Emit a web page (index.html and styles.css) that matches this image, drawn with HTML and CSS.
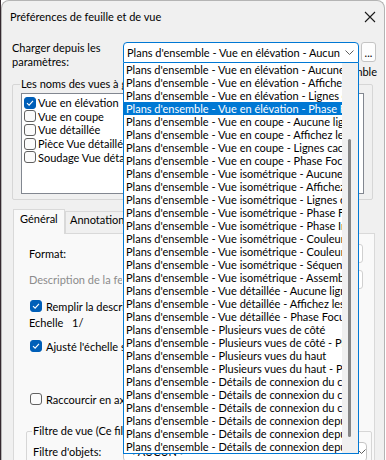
FILE: index.html
```html
<!DOCTYPE html>
<html lang="fr">
<head>
    <meta charset="UTF-8">
    <title>Préférences de feuille et de vue</title>
    <link rel="stylesheet" href="styles.css">
</head>
<body>
    <div class="window">
        <div class="titlebar">
            <span class="title">Préférences de feuille et de vue</span>
            <svg class="close" width="12" height="12" viewBox="0 0 12 12">
                <path d="M1 1 L11 11 M11 1 L1 11" stroke="#1a1a1a" stroke-width="1.1" fill="none"/>
            </svg>
        </div>

        <div class="content">
            <!-- chargement des paramètres -->
            <div class="load-row">
                <div class="load-label">Charger depuis les<br>paramètres:</div>
                <div class="combo-wrap">
                    <div class="combo open">
                        <span class="combo-text">Plans d'ensemble - Vue en élévation - Aucune ligne cachée</span>
                        <svg class="chevron" width="9" height="5" viewBox="0 0 9 5">
                            <path d="M0.5 0.5 L4.5 4.5 L8.5 0.5" stroke="#5d5d5d" stroke-width="1" fill="none"/>
                        </svg>
                    </div>
                    <div class="dropdown">
                        <ul class="dropdown-items">
                            <li>Plans d'ensemble - Vue en élévation - Aucune ligne cachée</li>
                            <li>Plans d'ensemble - Vue en élévation - Affichez les lignes cachées</li>
                            <li>Plans d'ensemble - Vue en élévation - Lignes cachées</li>
                            <li class="selected">Plans d'ensemble - Vue en élévation - Phase Focus</li>
                            <li>Plans d'ensemble - Vue en coupe - Aucune ligne cachée</li>
                            <li>Plans d'ensemble - Vue en coupe - Affichez les lignes cachées</li>
                            <li>Plans d'ensemble - Vue en coupe - Lignes cachées</li>
                            <li>Plans d'ensemble - Vue en coupe - Phase Focus</li>
                            <li>Plans d'ensemble - Vue isométrique - Aucune ligne cachée</li>
                            <li>Plans d'ensemble - Vue isométrique - Affichez les lignes cachées</li>
                            <li>Plans d'ensemble - Vue isométrique - Lignes cachées</li>
                            <li>Plans d'ensemble - Vue isométrique - Phase Focus</li>
                            <li>Plans d'ensemble - Vue isométrique - Phase Info</li>
                            <li>Plans d'ensemble - Vue isométrique - Couleur par phase</li>
                            <li>Plans d'ensemble - Vue isométrique - Couleur par classe</li>
                            <li>Plans d'ensemble - Vue isométrique - Séquence</li>
                            <li>Plans d'ensemble - Vue isométrique - Assemblage</li>
                            <li>Plans d'ensemble - Vue détaillée - Aucune ligne cachée</li>
                            <li>Plans d'ensemble - Vue détaillée - Affichez les lignes cachées</li>
                            <li>Plans d'ensemble - Vue détaillée - Phase Focus</li>
                            <li>Plans d'ensemble - Plusieurs vues de côté</li>
                            <li>Plans d'ensemble - Plusieurs vues de côté - Phase Focus</li>
                            <li>Plans d'ensemble - Plusieurs vues du haut</li>
                            <li>Plans d'ensemble - Plusieurs vues du haut - Phase Focus</li>
                            <li>Plans d'ensemble - Détails de connexion du côté</li>
                            <li>Plans d'ensemble - Détails de connexion du côté - Phase Focus</li>
                            <li>Plans d'ensemble - Détails de connexion du côté - Lignes cachées</li>
                            <li>Plans d'ensemble - Détails de connexion depuis le haut</li>
                            <li>Plans d'ensemble - Détails de connexion depuis le haut - Phase Focus</li>
                            <li>Plans d'ensemble - Détails de connexion depuis le haut - Lignes cachées</li>
                        </ul>
                        <div class="scrollbar"><div class="thumb"></div></div>
                    </div>
                </div>
                <button class="more-btn">...</button>
            </div>
            <div class="assembly-row">Charger la vue d'ensemble</div>

            <!-- noms des vues -->
            <fieldset class="group names-group">
                <legend>Les noms des vues à générer</legend>
                <div class="names-list">
                    <div class="name-item"><span class="cb checked"><svg width="12" height="12" viewBox="0 0 12 12"><path d="M3 6.2 L5.1 8.2 L9 3.9" stroke="#fff" stroke-width="1.1" fill="none"/></svg></span>Vue en élévation</div>
                    <div class="name-item"><span class="cb"></span>Vue en coupe</div>
                    <div class="name-item"><span class="cb"></span>Vue détaillée</div>
                    <div class="name-item"><span class="cb"></span>Pièce Vue détaillée</div>
                    <div class="name-item"><span class="cb"></span>Soudage Vue détaillée</div>
                </div>
            </fieldset>

            <!-- onglets -->
            <div class="tabs">
                <div class="tab active">Général</div>
                <div class="tab">Annotations</div>
            </div>
            <div class="tab-panel">
                <div class="field-row format-row">
                    <span class="field-label">Format:</span>
                    <div class="field-box"></div>
                </div>
                <div class="field-row desc-row">
                    <span class="placeholder">Description de la feuille</span>
                    <div class="field-box"></div>
                </div>
                <div class="check-row fill-row">
                    <span class="cb checked"><svg width="12" height="12" viewBox="0 0 12 12"><path d="M3 6.2 L5.1 8.2 L9 3.9" stroke="#fff" stroke-width="1.1" fill="none"/></svg></span>Remplir la description automatiquement
                </div>
                <div class="field-row scale-row">
                    <span class="field-label">Echelle <span class="scale-prefix">1/</span></span>
                </div>
                <div class="check-row fit-row">
                    <span class="cb checked"><svg width="12" height="12" viewBox="0 0 12 12"><path d="M3 6.2 L5.1 8.2 L9 3.9" stroke="#fff" stroke-width="1.1" fill="none"/></svg></span>Ajusté l'échelle selon la feuille
                </div>
                <div class="check-row short-row">
                    <span class="cb"></span>Raccourcir en axe
                </div>
                <fieldset class="group filter-group">
                    <legend>Filtre de vue (Ce filtre s'applique à toutes les vues)</legend>
                    <div class="field-row filter-row">
                        <span class="field-label">Filtre d'objets:</span>
                        <div class="combo small">
                            <span class="combo-text">&lt; AUCUN &gt;</span>
                            <svg class="chevron" width="9" height="5" viewBox="0 0 9 5">
                                <path d="M0.5 0.5 L4.5 4.5 L8.5 0.5" stroke="#5d5d5d" stroke-width="1" fill="none"/>
                            </svg>
                        </div>
                    </div>
                </fieldset>
            </div>
        </div>
    </div>
</body>
</html>
```

FILE: styles.css
```css
:root {
    --accent: #0078d4;
    --bg: #f0f0f0;
}

* {
    box-sizing: border-box;
}

body {
    margin: 0;
    height: 460px;
    overflow: hidden;
    background: linear-gradient(to right, #35292f 0 1px, #fff 1px);
    font-family: Lato, "Liberation Sans", sans-serif;
    font-size: 11px;
    color: #000;
}

.window {
    margin-left: 1px;
    width: 384px;
    height: 480px;
    background: var(--bg);
    border: 1px solid #b4b4b4;
    border-bottom: none;
    border-radius: 8px 8px 0 0;
}

.titlebar {
    height: 31px;
    display: flex;
    align-items: center;
    justify-content: space-between;
    padding: 0 8px 0 8px;
}

.content {
    padding-top: 9px;
}

/* ligne de chargement */
.load-row {
    display: flex;
    align-items: flex-start;
    height: 24px;
    padding-left: 10px;
}

.load-label {
    width: 111px;
    line-height: 14px;
}

.combo-wrap {
    position: relative;
    margin-top: 1px;
}

.combo {
    display: flex;
    align-items: center;
    width: 236px;
    height: 21px;
    padding-left: 3px;
    background: #fff;
    border: 1px solid #c4c4c4;
    border-radius: 4px;
}

.combo.open {
    border-color: var(--accent);
    border-radius: 4px 4px 0 0;
}

.combo-text {
    width: 213px;
    overflow: hidden;
    white-space: nowrap;
}

.chevron {
    margin-left: 5px;
}

.dropdown {
    position: absolute;
    top: 100%;
    left: 0;
    width: 236px;
    display: flex;
    background: #fff;
    border: 1px solid var(--accent);
    border-top: none;
    z-index: 10;
}

.dropdown-items {
    list-style: none;
    margin: 0;
    padding: 0;
    width: 218px;
}

.dropdown-items li {
    height: 13px;
    line-height: 13px;
    padding-left: 2px;
    white-space: nowrap;
    overflow: hidden;
}

.dropdown-items li.selected {
    background: var(--accent);
    color: #fff;
}

.scrollbar {
    flex: 1;
    background: #f0f0f0;
    padding: 76px 0 0 6px;
}

.thumb {
    width: 3px;
    height: 298px;
    border-radius: 2px;
    background: #858585;
}

.more-btn {
    margin: 1px 0 0 2px;
    width: 15px;
    height: 20px;
    padding: 0 0 3px;
    font: inherit;
    line-height: 1;
    display: flex;
    align-items: flex-end;
    justify-content: center;
    background: #fdfdfd;
    border: 1px solid #c4c4c4;
    border-radius: 3px;
}

.assembly-row {
    line-height: 13px;
    text-align: right;
    padding-right: 7px;
}

/* cadres */
.group {
    margin: 0;
    border: 1px solid #d6d6d6;
    border-radius: 2px;
}

.group legend {
    padding: 0 1px;
    margin-left: -1px;
    line-height: 12px;
    white-space: nowrap;
}

.names-group {
    margin-left: 10px;
    width: 361px;
    padding: 3px 8px 5px 8px;
}

.names-list {
    width: 343px;
    height: 101px;
    background: #fff;
    border: 1px solid #828790;
    padding: 2px 0 0 2px;
}

.name-item {
    display: flex;
    align-items: center;
    height: 13.6px;
    gap: 2px;
    white-space: nowrap;
}

.cb {
    display: inline-flex;
    width: 12px;
    height: 12px;
    flex: none;
    background: #fbfbfb;
    border: 1px solid #616161;
    border-radius: 3px;
}

.cb.checked {
    background: #005fb8;
    border-color: #005fb8;
}

.cb svg {
    margin: -1px;
}

/* onglets */
.tabs {
    display: flex;
    align-items: flex-end;
    margin: 8px 0 0 11px;
    height: 25px;
}

.tab {
    height: 22px;
    padding: 1px 4px 0 4px;
    line-height: 14px;
    background: #f0f0f0;
    border: 1px solid #d9d9d9;
    border-bottom: none;
}

.tab.active {
    height: 25px;
    width: 52px;
    padding: 2px 0 0 6px;
    background: #f9f9f9;
    margin-bottom: -1px;
    position: relative;
}

.tab-panel {
    margin-left: 11px;
    width: 362px;
    height: 240px;
    background: #f9f9f9;
    border: 1px solid #d9d9d9;
    padding: 10px 0 0 15px;
}

.field-row {
    display: flex;
    align-items: center;
    height: 19px;
}

.field-label {
    width: 93px;
    white-space: nowrap;
}

.scale-prefix {
    margin-left: 6px;
}

.field-box {
    margin-left: auto;
    margin-right: 11px;
    width: 239px;
    height: 19px;
    background: #fff;
    border: 1px solid #d0d0d0;
    border-radius: 3px;
}

.desc-row {
    margin-top: 7px;
}

.placeholder {
    color: #8c8c8c;
    white-space: nowrap;
    width: 93px;
    overflow: hidden;
}

.check-row {
    display: flex;
    align-items: center;
    gap: 4px;
    height: 14px;
    padding-left: 1px;
    white-space: nowrap;
}

.fill-row {
    margin-top: 10px;
}

.scale-row {
    height: 14px;
    margin-top: 2px;
}

.fit-row {
    margin-top: 10px;
}

.short-row {
    margin-top: 39px;
}

.filter-group {
    margin: 18px 0 0 -3px;
    width: 346px;
    padding: 4px 0 0 6px;
}

.filter-group legend {
    line-height: 14px;
    margin-left: -1px;
}

.filter-row .field-label {
    width: 90px;
}

.combo.small {
    width: 244px;
    height: 20px;
    padding-left: 5px;
}

.combo.small .combo-text {
    width: 223px;
}
```
